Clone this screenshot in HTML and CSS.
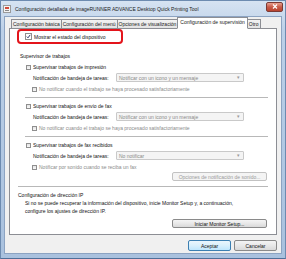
FILE: index.html
```html
<!DOCTYPE html>
<html>
<head>
    <title>Configuración detallada</title>
    <link rel="stylesheet" href="styles.css">
</head>
<body>
    <div class="window">
        <div class="titlebar">
            <svg class="app-icon" width="8" height="8" viewBox="0 0 8 8">
                <rect x="0.5" y="0.5" width="7" height="7" fill="#f4f4f4" stroke="#9a9a9a"/>
                <rect x="2" y="2" width="4" height="2" fill="#d24a3a"/>
                <rect x="2" y="5" width="4" height="1" fill="#888"/>
            </svg>
            <span class="title">Configuración detallada de imageRUNNER ADVANCE Desktop Quick Printing Tool</span>
            <div class="close">
                <svg width="6" height="5" viewBox="0 0 6 5"><path d="M1 0.5 L5 4.5 M5 0.5 L1 4.5" stroke="#fff" stroke-width="1.2"/></svg>
            </div>
        </div>
        <div class="client">
            <div class="tabs">
                <div class="tab">Configuración básica</div>
                <div class="tab">Configuración del menú</div>
                <div class="tab">Opciones de visualización</div>
                <div class="tab active">Configuración de supervisión</div>
                <div class="tab">Otro</div>
            </div>
            <div class="panel">
                <div class="highlight">
                    <span class="cb checked"><svg width="5" height="5" viewBox="0 0 5 5"><path d="M0.8 2.6 L2 3.8 L4.2 0.9" fill="none" stroke="#2a3a6a" stroke-width="1"/></svg></span>
                    <span>Mostrar el estado del dispositivo</span>
                </div>

                <div class="group-title">Supervisor de trabajos</div>

                <div class="row check l1"><span class="cb"></span>Supervisar trabajos de impresión</div>
                <div class="row notif">
                    <span class="label">Notificación de bandeja de tareas:</span>
                    <div class="select">Notificar con un icono y un mensaje<span class="arrow">▾</span></div>
                </div>
                <div class="row check l2 disabled"><span class="cb"></span>No notificar cuando el trabajo se haya procesado satisfactoriamente</div>
                <div class="sep"></div>

                <div class="row check l1"><span class="cb"></span>Supervisar trabajos de envío de fax</div>
                <div class="row notif">
                    <span class="label">Notificación de bandeja de tareas:</span>
                    <div class="select">Notificar con un icono y un mensaje<span class="arrow">▾</span></div>
                </div>
                <div class="row check l2 disabled"><span class="cb"></span>No notificar cuando el trabajo se haya procesado satisfactoriamente</div>
                <div class="sep"></div>

                <div class="row check l1 first"><span class="cb"></span>Supervisar trabajos de fax recibidos</div>
                <div class="row notif">
                    <span class="label">Notificación de bandeja de tareas:</span>
                    <div class="select">No notificar<span class="arrow">▾</span></div>
                </div>
                <div class="row check l2 disabled"><span class="cb"></span>Notificar por sonido cuando se reciba un fax</div>
                <div class="btn-row"><div class="btn disabled">Opciones de notificación de sonido...</div></div>
                <div class="sep wide"></div>

                <div class="group-title ip">Configuración de dirección IP</div>
                <p class="info">Si no se puede recuperar la información del dispositivo, inicie Monitor Setup y, a continuación,<br>configure los ajustes de dirección IP.</p>
                <div class="btn-row"><div class="btn">Iniciar Monitor Setup...</div></div>
            </div>
            <div class="footer">
                <div class="btn main default">Aceptar</div>
                <div class="btn main">Cancelar</div>
            </div>
        </div>
    </div>
</body>
</html>
```
FILE: styles.css
```css
body {
    margin: 0;
    font-family: "Liberation Sans", Arial, sans-serif;
    font-size: 5px;
    color: #111;
}
.window {
    width: 286px;
    height: 259px;
    box-sizing: border-box;
    display: flex;
    flex-direction: column;
    background: linear-gradient(#d6e3f2, #bcd0e8 30px, #a9c1de);
    border: 1px solid #6d8bb0;
    border-bottom-color: #4f6f98;
}
.titlebar {
    height: 15px;
    display: flex;
    align-items: center;
    padding: 0 2px 0 2px;
}
.app-icon {
    margin-right: 4px;
}
.title {
    flex: 1;
    color: #222;
}
.close {
    width: 15px;
    height: 8px;
    margin-top: -4px;
    border: 1px solid #7a3a35;
    border-radius: 2px;
    background: linear-gradient(#e8a08f, #c75a48 50%, #b8432f);
    display: flex;
    align-items: center;
    justify-content: center;
}
.client {
    flex: 1;
    margin: 0 3px 4px 3px;
    background: #f0f0f0;
    border: 1px solid #8ca3c2;
    display: flex;
    flex-direction: column;
    padding: 0 4px 0 4px;
}
.tabs {
    display: flex;
    align-items: flex-end;
    height: 11px;
    margin-left: 2px;
    position: relative;
    z-index: 1;
}
.tab {
    height: 8px;
    line-height: 8px;
    padding: 0 1px;
    border: 1px solid #8c8e94;
    border-bottom: none;
    margin-right: -1px;
    background: linear-gradient(#f2f2f2, #e3e3e3);
    color: #222;
    white-space: nowrap;
}
.tab.active {
    height: 10px;
    padding: 0 2px;
    background: #fff;
    border-bottom: 1px solid #fff;
    margin-bottom: -1px;
    position: relative;
    z-index: 2;
}
.panel {
    height: 207px;
    box-sizing: border-box;
    background: #fff;
    border: 1px solid #8c8e94;
    display: flex;
    flex-direction: column;
    padding-left: 7px;
}
.highlight {
    width: 95px;
    height: 11px;
    border: 2px solid #e3141b;
    border-radius: 4px;
    display: flex;
    align-items: center;
    padding-left: 7px;
    color: #111;
}
.cb {
    width: 5px;
    height: 5px;
    box-sizing: border-box;
    border: 1px solid #8f8f8f;
    background: linear-gradient(#e4e4e4, #f8f8f8);
    margin-right: 2px;
    display: inline-flex;
    flex-shrink: 0;
}
.cb.checked {
    border: none;
    background: #fff;
    outline: 1px solid #8f8f8f;
    outline-offset: 0;
    margin-right: 3px;
}
.cb.checked svg {
    display: block;
}
.group-title {
    height: 8px;
    line-height: 8px;
    margin-top: 8px;
    margin-left: 3px;
}
.row {
    display: flex;
    align-items: center;
    white-space: nowrap;
}
.check {
    height: 8px;
}
.l1 {
    margin-left: 9px;
    margin-top: 3px;
}
.l1.first {
    margin-top: 3px;
}
.sep + .l1 {
    margin-top: 4px;
}
.l2 {
    margin-left: 15px;
    margin-top: 3px;
}
.disabled {
    color: #8a8a8a;
}
.notif {
    margin-top: 2px;
    height: 9px;
    margin-left: 16px;
}
.label {
    width: 83px;
}
.select {
    width: 128px;
    height: 9px;
    box-sizing: border-box;
    border: 1px solid #c9c9c9;
    border-radius: 1px;
    background: #f4f4f4;
    color: #8a8a8a;
    padding-left: 2px;
    display: flex;
    align-items: center;
    position: relative;
}
.arrow {
    position: absolute;
    right: 3px;
    top: 0;
    font-size: 5px;
    line-height: 7px;
    color: #9a9a9a;
}
.sep {
    height: 1px;
    background: #b8b8b8;
    margin: 4px 8px 0 8px;
}
.sep.wide {
    margin: 5px 8px 0 1px;
}
.btn-row {
    display: flex;
    justify-content: flex-end;
    padding-right: 9px;
}
.btn {
    width: 95px;
    height: 9px;
    box-sizing: border-box;
    border: 1px solid #8a8a8a;
    border-radius: 2px;
    background: linear-gradient(#f4f4f4, #e8e8e8 50%, #d9d9d9);
    display: flex;
    align-items: center;
    justify-content: center;
    margin-top: 1px;
}
.btn.disabled {
    border-color: #c2c2c2;
    background: #f4f4f4;
    color: #9a9a9a;
}
.group-title.ip {
    margin-top: 4px;
    margin-left: 1px;
}
.info {
    margin: 0 0 0 8px;
    line-height: 8px;
}
.info + .btn-row .btn {
    margin-top: 4px;
}
.footer {
    display: flex;
    justify-content: flex-end;
    gap: 3px;
    margin-top: 5px;
}
.btn.main {
    width: 43px;
    height: 11px;
    margin-top: 0;
}
.btn.default {
    border-color: #3c7fb1;
    background: linear-gradient(#eaf6fd, #d9f0fc 50%, #bee6fd);
}
```
